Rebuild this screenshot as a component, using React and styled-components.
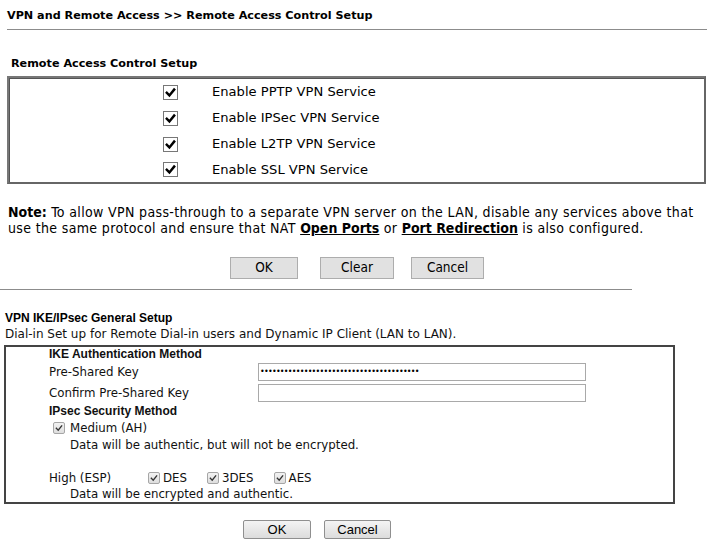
import React from "react";
import styled, { createGlobalStyle } from "styled-components";

const Global = createGlobalStyle`
  body {
    margin: 0;
    background: #fff;
    color: #000;
    font-family: "DejaVu Sans", Verdana, sans-serif;
  }
`;

const Page = styled.div`
  width: 707px;
  height: 543px;
  overflow: hidden;
`;

const Title = styled.div`
  font-weight: bold;
  font-size: 11.2px;
  padding: 8px 0 0 7px;
  height: 16px;
  line-height: 16px;
`;

const Rule = styled.div`
  height: 1px;
  background: #8c8c8c;
  margin: ${(p) => p.$margin || "5px 0 0 7px"};
  width: ${(p) => p.$width || "auto"};
`;

const SectionHead = styled.div`
  font-weight: bold;
  font-size: 11.2px;
  padding: 26px 0 0 11px;
  height: 16px;
  line-height: 16px;
`;

const ServiceBox = styled.div`
  margin: 4px 1px 0 7px;
  padding-top: 1px;
  border: 2px solid;
  border-color: #777 #666 #666 #777;
  box-shadow: inset 1px 1px 0 #555;
`;

const ServiceRow = styled.label`
  display: flex;
  align-items: center;
  height: 26px;
  padding-left: 154px;
  font-size: 13.1px;
  line-height: 16px;
  &:last-child {
    height: 25px;
  }
`;

const BigCheck = styled.span`
  width: 13px;
  height: 13px;
  border: 1px solid #777;
  background: #fff;
  display: inline-flex;
  align-items: center;
  justify-content: center;
  margin-right: 34px;
`;

const Note = styled.div`
  font-family: "DejaVu Sans Condensed", "DejaVu Sans", sans-serif;
  font-size: 14px;
  line-height: 16px;
  padding: 20px 0 0 8px;
  letter-spacing: 0.35px;
  b {
    font-weight: bold;
    letter-spacing: 0;
  }
  a {
    color: #000;
    font-weight: bold;
    letter-spacing: 0;
    text-decoration: underline;
  }
`;

const ButtonBar = styled.div`
  display: flex;
  padding: ${(p) => p.$pad};
`;

const Button = styled.button`
  width: ${(p) => p.$w}px;
  height: ${(p) => p.$h || 22}px;
  margin-right: ${(p) => p.$mr || 0}px;
  border: 1px solid ${(p) => (p.$old ? "#8f8f8f" : "#adadad")};
  background: ${(p) =>
    p.$old ? "linear-gradient(#f4f4f4, #dcdcdc)" : "#e1e1e1"};
  font-family: ${(p) =>
    p.$old
      ? '"Liberation Sans", Arial, sans-serif'
      : '"DejaVu Sans Condensed", "DejaVu Sans", sans-serif'};
  font-size: ${(p) => (p.$old ? 13 : 13.5)}px;
  line-height: 1;
  color: #000;
  padding: 0;
  border-radius: ${(p) => (p.$old ? "2px" : "0")};
`;

const IkeHead = styled.div`
  font-family: "Liberation Sans", Arial, sans-serif;
  font-weight: bold;
  font-size: 12px;
  padding: 20px 0 0 5px;
  line-height: 16px;
`;

const IkeSub = styled.div`
  font-size: 12px;
  padding-left: 5px;
  line-height: 16px;
  color: #111;
`;

const IkeBox = styled.div`
  margin: 3px 0 0 4px;
  width: 624px;
  border: 2px solid #444;
  padding: 0 0 0 43px;
  font-size: 11.8px;
  color: #111;
`;

const Row = styled.div`
  display: flex;
  align-items: center;
  height: ${(p) => p.$h || 19}px;
  padding-left: ${(p) => p.$indent || 0}px;
`;

const Bold = styled.span`
  font-family: "Liberation Sans", Arial, sans-serif;
  font-weight: bold;
  font-size: 12px;
`;

const FieldLabel = styled.span`
  width: ${(p) => p.$w || 0}px;
`;

const TextField = styled.div`
  width: 325px;
  height: 16px;
  border: 1px solid #a9a9a9;
  display: flex;
  align-items: center;
  padding-left: 1px;
  font-size: 8px;
  letter-spacing: -0.75px;
  line-height: 1;
  overflow: hidden;
  color: #000;
`;

const SmallCheck = styled.span`
  width: 10px;
  height: 10px;
  border: 1px solid #a6a6a6;
  border-radius: 2px;
  background: linear-gradient(#f2f2f2, #dedede);
  display: inline-flex;
  align-items: center;
  justify-content: center;
  margin-right: ${(p) => p.$mr || 3}px;
  margin-left: ${(p) => p.$ml || 0}px;
`;

const Tick = ({ size = 11, color = "#000", weight = 2.4 }) => (
  <svg width={size} height={size} viewBox="0 0 12 12">
    <path
      d="M2 6.4 L4.8 9.2 L10 2.8"
      fill="none"
      stroke={color}
      strokeWidth={weight}
      strokeLinecap="square"
    />
  </svg>
);

const SmallTick = () => <Tick size={8} color="#333" weight={2} />;

const services = [
  "Enable PPTP VPN Service",
  "Enable IPSec VPN Service",
  "Enable L2TP VPN Service",
  "Enable SSL VPN Service",
];

export default function App() {
  return (
    <Page>
      <Global />
      <Title>VPN and Remote Access &gt;&gt; Remote Access Control Setup</Title>
      <Rule />
      <SectionHead>Remote Access Control Setup</SectionHead>
      <ServiceBox>
        {services.map((s) => (
          <ServiceRow key={s}>
            <BigCheck>
              <Tick size={11} weight={2.7} />
            </BigCheck>
            {s}
          </ServiceRow>
        ))}
      </ServiceBox>
      <Note>
        <b>Note:</b> To allow VPN pass-through to a separate VPN server on the
        LAN, disable any services above that use the same protocol and ensure
        that NAT <a href="#">Open Ports</a> or <a href="#">Port Redirection</a>{" "}
        is also configured.
      </Note>
      <ButtonBar $pad="21px 0 0 230px">
        <Button $w={68} $mr={22}>OK</Button>
        <Button $w={74} $mr={17}>Clear</Button>
        <Button $w={73}>Cancel</Button>
      </ButtonBar>
      <Rule $margin="10px 0 0 0" $width="632px" />
      <IkeHead>VPN IKE/IPsec General Setup</IkeHead>
      <IkeSub>
        Dial-in Set up for Remote Dial-in users and Dynamic IP Client (LAN to
        LAN).
      </IkeSub>
      <IkeBox>
        <Row $h={14}>
          <Bold>IKE Authentication Method</Bold>
        </Row>
        <Row $h={22}>
          <FieldLabel $w={209}>Pre-Shared Key</FieldLabel>
          <TextField>{"•".repeat(40)}</TextField>
        </Row>
        <Row>
          <FieldLabel $w={209}>Confirm Pre-Shared Key</FieldLabel>
          <TextField />
        </Row>
        <Row $h={17}>
          <Bold>IPsec Security Method</Bold>
        </Row>
        <Row $h={17} $indent={4}>
          <SmallCheck $mr={5}>
            <SmallTick />
          </SmallCheck>
          Medium (AH)
        </Row>
        <Row $h={17} $indent={21}>
          Data will be authentic, but will not be encrypted.
        </Row>
        <Row $h={16} />
        <Row $h={17}>
          <FieldLabel $w={99}>High (ESP)</FieldLabel>
          <SmallCheck>
            <SmallTick />
          </SmallCheck>
          DES
          <SmallCheck $ml={20}>
            <SmallTick />
          </SmallCheck>
          3DES
          <SmallCheck $ml={20}>
            <SmallTick />
          </SmallCheck>
          AES
        </Row>
        <Row $h={16} $indent={21}>
          Data will be encrypted and authentic.
        </Row>
      </IkeBox>
      <ButtonBar $pad="16px 0 0 243px">
        <Button $old $w={68} $h={19} $mr={13}>OK</Button>
        <Button $old $w={67} $h={19}>Cancel</Button>
      </ButtonBar>
    </Page>
  );
}
